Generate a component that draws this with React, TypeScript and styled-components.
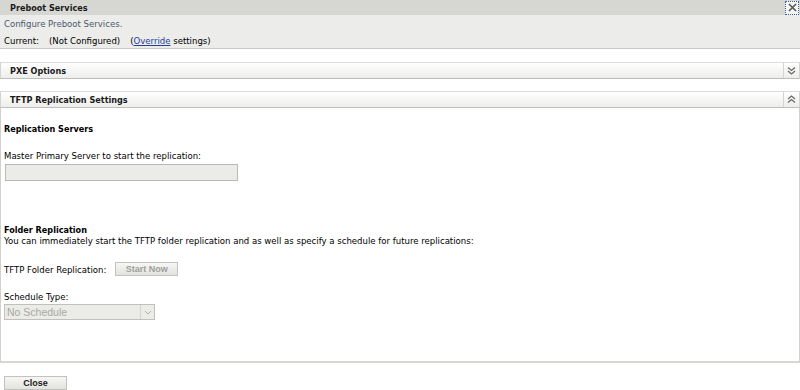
import React from "react";
import styled, { createGlobalStyle } from "styled-components";

const GlobalStyle = createGlobalStyle`
  body {
    margin: 0;
    background: #ffffff;
    font-family: "DejaVu Sans Condensed", "DejaVu Sans", sans-serif;
    font-size: 9.5px;
    color: #000000;
  }
`;

const Page = styled.div`
  width: 800px;
  height: 390px;
  display: flex;
  flex-direction: column;
`;

const TitleBar = styled.div`
  height: 15px;
  background: #d6d7d2;
  display: flex;
  align-items: center;
  justify-content: space-between;
  padding-left: 10px;
`;

const TitleText = styled.span`
  font-weight: bold;
  font-size: 9px;
  color: #1a1a1a;
`;

const CloseIcon = styled.div`
  width: 12px;
  height: 12px;
  margin-right: 1px;
  border: 1px dotted #3b5ba8;
  background: #f4f4f2;
  display: flex;
  align-items: center;
  justify-content: center;
`;

const InfoPanel = styled.div`
  height: 34px;
  box-sizing: border-box;
  background: #ececea;
  border-bottom: 1px solid #c9c9c5;
  padding: 3px 0 2px 4px;
  display: flex;
  flex-direction: column;
  justify-content: space-between;
`;

const Hint = styled.div`
  color: #4b5a6b;
`;

const CurrentLine = styled.div`
  display: flex;
  gap: 10px;
`;

const Link = styled.a`
  color: #1f3f9a;
  text-decoration: underline;
`;

const Section = styled.div<{ $top: number }>`
  margin-top: ${p => p.$top}px;
  display: flex;
  flex-direction: column;
`;

const SectionHeader = styled.div`
  height: 15px;
  display: flex;
  border-top: 1px solid #dcdcda;
  border-bottom: 1px solid #bdbdb9;
  border-left: 1px solid #d4d4d0;
  border-right: 1px solid #d4d4d0;
  background: linear-gradient(#ffffff, #ededeb);
`;

const SectionTitle = styled.div`
  flex: 1;
  padding-left: 9px;
  display: flex;
  align-items: center;
  font-weight: bold;
  font-size: 9px;
  color: #1a1a1a;
`;

const ToggleCell = styled.div`
  width: 15px;
  border-left: 1px solid #d4d4d0;
  display: flex;
  align-items: center;
  justify-content: center;
`;

const SectionBody = styled.div`
  height: 255px;
  border-left: 1px solid #d0d0cc;
  border-right: 1px solid #d0d0cc;
  border-bottom: 2px solid #d6d6d2;
  padding: 16px 4px 0 3px;
  box-sizing: border-box;
  display: flex;
  flex-direction: column;
`;

const GroupTitle = styled.div<{ $top?: number }>`
  font-weight: bold;
  font-size: 9px;
  margin-top: ${p => p.$top ?? 0}px;
`;

const Label = styled.div<{ $top?: number }>`
  margin-top: ${p => p.$top ?? 0}px;
`;

const TextBox = styled.div`
  margin-top: 3px;
  margin-left: 1px;
  width: 233px;
  height: 17px;
  box-sizing: border-box;
  border: 1px solid #b9b9b5;
  background: #ebebe7;
`;

const Row = styled.div`
  margin-top: 16px;
  display: flex;
  align-items: center;
  gap: 9px;
`;

const GrayButton = styled.div<{ $width: number; $muted?: boolean }>`
  width: ${p => p.$width}px;
  height: 14px;
  box-sizing: border-box;
  border: 1px solid #c2c2be;
  background: linear-gradient(#f6f6f4, #e2e2de);
  display: flex;
  align-items: center;
  justify-content: center;
  font-family: "Liberation Sans", Arial, sans-serif;
  font-weight: bold;
  font-size: 9px;
  color: ${p => (p.$muted ? "#a0a09c" : "#1a1a1a")};
`;

const Select = styled.div`
  margin-top: 2px;
  width: 151px;
  height: 16px;
  box-sizing: border-box;
  border: 1px solid #c0c0bc;
  background: #ebebe7;
  display: flex;
  align-items: center;
  font-family: "Liberation Sans", Arial, sans-serif;
  font-size: 10.5px;
  color: #a8a8a4;
  padding-left: 2px;
`;

const SelectText = styled.span`
  flex: 1;
`;

const Arrow = styled.div`
  width: 13px;
  height: 14px;
  border-left: 1px solid #d4d4d0;
  display: flex;
  align-items: center;
  justify-content: center;
`;

const Footer = styled.div`
  margin-top: 13px;
  padding-left: 4px;
`;

const DoubleChevron = ({ up }: { up?: boolean }) => (
  <svg width="9" height="9" viewBox="0 0 9 9">
    <g
      fill="none"
      stroke="#6a6a66"
      strokeWidth="1.3"
      transform={up ? "rotate(180 4.5 4.5)" : undefined}
    >
      <path d="M1 1.5 L4.5 4.5 L8 1.5" />
      <path d="M1 5 L4.5 8 L8 5" />
    </g>
  </svg>
);

export default function App() {
  return (
    <Page>
      <GlobalStyle />
      <TitleBar>
        <TitleText>Preboot Services</TitleText>
        <CloseIcon>
          <svg width="9" height="9" viewBox="0 0 9 9">
            <path d="M1 1 L8 8 M8 1 L1 8" stroke="#555" strokeWidth="1.6" />
          </svg>
        </CloseIcon>
      </TitleBar>
      <InfoPanel>
        <Hint>Configure Preboot Services.</Hint>
        <CurrentLine>
          <span>Current:</span>
          <span>(Not Configured)</span>
          <span>
            (<Link>Override</Link> settings)
          </span>
        </CurrentLine>
      </InfoPanel>

      <Section $top={13}>
        <SectionHeader>
          <SectionTitle>PXE Options</SectionTitle>
          <ToggleCell>
            <DoubleChevron />
          </ToggleCell>
        </SectionHeader>
      </Section>

      <Section $top={12}>
        <SectionHeader>
          <SectionTitle>TFTP Replication Settings</SectionTitle>
          <ToggleCell>
            <DoubleChevron up />
          </ToggleCell>
        </SectionHeader>
        <SectionBody>
          <GroupTitle>Replication Servers</GroupTitle>
          <Label $top={16}>Master Primary Server to start the replication:</Label>
          <TextBox />
          <GroupTitle $top={44}>Folder Replication</GroupTitle>
          <Label>
            You can immediately start the TFTP folder replication and as well as
            specify a schedule for future replications:
          </Label>
          <Row>
            <span>TFTP Folder Replication:</span>
            <GrayButton $width={63} $muted>
              Start Now
            </GrayButton>
          </Row>
          <Label $top={15}>Schedule Type:</Label>
          <Select>
            <SelectText>No Schedule</SelectText>
            <Arrow>
              <svg width="8" height="5" viewBox="0 0 8 5">
                <path d="M1 1 L4 4 L7 1" fill="none" stroke="#b0b0ac" strokeWidth="1" />
              </svg>
            </Arrow>
          </Select>
        </SectionBody>
      </Section>

      <Footer>
        <GrayButton $width={63}>Close</GrayButton>
      </Footer>
    </Page>
  );
}
